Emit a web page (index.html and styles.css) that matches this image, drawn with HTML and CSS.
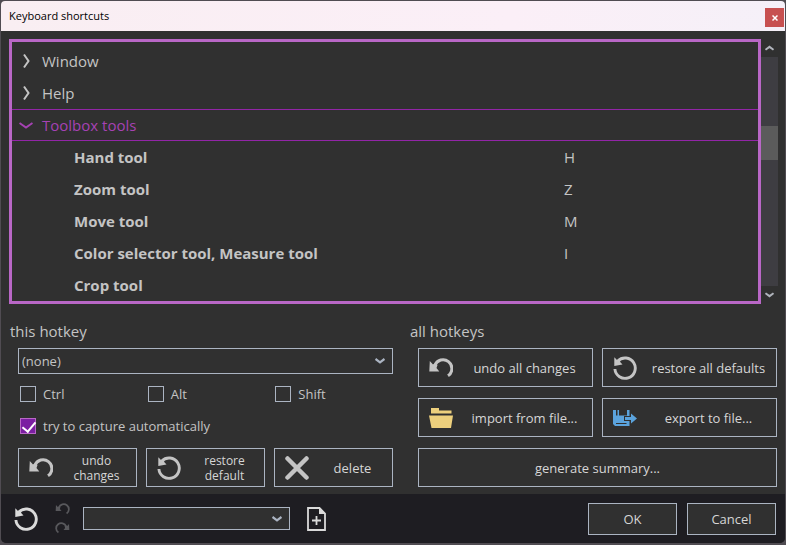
FILE: index.html
```html
<!DOCTYPE html>
<html lang="en">
<head>
<meta charset="utf-8">
<title>Keyboard shortcuts</title>
<link rel="stylesheet" href="styles.css">
</head>
<body>
<svg class="sprite" aria-hidden="true">
  <symbol id="undo" viewBox="0 0 24 24"><path d="M5.800 9.500A8.800 8.800 0 1 1 19 19.800" fill="none" stroke="currentColor" stroke-width="3"/><path d="M0.800 5L0.300 15.500H10.300L7.500 12L8.500 9L5.500 7.500L4 8.500Z" fill="currentColor"/></symbol>
  <symbol id="restore" viewBox="0 0 24 24"><path d="M4.800 5A10.200 10.200 0 1 1 1.900 13" fill="none" stroke="currentColor" stroke-width="2.900"/><path d="M1.300 1.300V10L9.500 8.500L7.200 6L7 3.500L4 4Z" fill="currentColor"/></symbol>
  <symbol id="down" viewBox="0 0 10 6"><path d="M0.500 1L5 4.300L9.500 1" fill="none" stroke="currentColor" stroke-width="2.200"/></symbol>
</svg>
<div class="window">
  <header class="titlebar">
    <h1>Keyboard shortcuts</h1>
    <button class="close" type="button" aria-label="Close"><svg viewBox="0 0 6 6"><path d="M0.500 0.500L5.500 5.500M5.500 0.500L0.500 5.500" stroke="currentColor" stroke-width="1.500"/></svg></button>
  </header>
  <main>
    <div class="browser">
      <div class="list">
        <table>
          <tbody>
            <tr class="group"><th colspan="2"><span><svg class="arrow" viewBox="0 0 14 16"><path d="M5 1.500L9.500 8L5 14.500" /></svg>Window</span></th></tr>
            <tr class="group"><th colspan="2"><span><svg class="arrow" viewBox="0 0 14 16"><path d="M5 1.500L9.500 8L5 14.500" /></svg>Help</span></th></tr>
            <tr class="group open"><th colspan="2"><span><svg class="arrow" viewBox="0 0 14 16"><path d="M0.500 6L7 10.500L13.500 6" /></svg>Toolbox tools</span></th></tr>
            <tr><th>Hand tool</th><td>H</td></tr>
            <tr><th>Zoom tool</th><td>Z</td></tr>
            <tr><th>Move tool</th><td>M</td></tr>
            <tr><th>Color selector tool, Measure tool</th><td>I</td></tr>
            <tr><th>Crop tool</th><td></td></tr>
          </tbody>
        </table>
      </div>
      <div class="scrollbar">
        <button type="button" aria-label="Scroll up"><svg class="up"><use href="#down"/></svg></button>
        <div class="track"><div class="thumb"></div></div>
        <button type="button" aria-label="Scroll down"><svg><use href="#down"/></svg></button>
      </div>
    </div>
    <div class="panels">
      <section>
        <h2 id="this-hotkey">this hotkey</h2>
        <div class="fields">
          <div class="picker">
            <select aria-labelledby="this-hotkey"><option>(none)</option></select>
            <svg><use href="#down"/></svg>
          </div>
          <div class="checks">
            <label><input type="checkbox">Ctrl</label>
            <label><input type="checkbox">Alt</label>
            <label><input type="checkbox">Shift</label>
            <label class="wide"><input type="checkbox" checked>try to capture automatically</label>
          </div>
          <div class="buttons three">
            <button class="btn small" type="button"><svg class="icon"><use href="#undo"/></svg><span>undo changes</span></button>
            <button class="btn small" type="button"><svg class="icon"><use href="#restore"/></svg><span>restore default</span></button>
            <button class="btn" type="button"><svg class="icon" viewBox="0 0 24 24"><path d="M2.500 2.500L21.500 21.500M21.500 2.500L2.500 21.500" stroke="currentColor" stroke-width="4.500" stroke-linecap="round"/></svg><span>delete</span></button>
          </div>
        </div>
      </section>
      <section>
        <h2>all hotkeys</h2>
        <div class="fields">
          <div class="buttons two">
            <button class="btn" type="button"><svg class="icon"><use href="#undo"/></svg><span>undo all changes</span></button>
            <button class="btn" type="button"><svg class="icon"><use href="#restore"/></svg><span>restore all defaults</span></button>
            <button class="btn" type="button"><svg class="icon folder" viewBox="0 0 24 24"><path d="M2 2H10V4.500H22.500V7.500H2ZM0 9.500H24L22 22H2.500Z" fill="currentColor"/></svg><span>import from file...</span></button>
            <button class="btn" type="button"><svg class="icon save" viewBox="0 0 24 24"><path d="M0 4H3V9.500H4.500V4H6V9.500H14V4H16.500V20H2L0 18Z" fill="currentColor"/><path d="M3 17.500H13.500" stroke="#303030"/><path d="M11 10H17V6L24 12.500L17 19V15H11Z" fill="#303030"/><path d="M12 11H18V7.500L24 12.500L18 17.500V14H12Z" fill="currentColor"/></svg><span>export to file...</span></button>
            <button class="btn wide" type="button"><span>generate summary...</span></button>
          </div>
        </div>
      </section>
    </div>
  </main>
  <footer>
    <button class="tool" type="button" aria-label="Restore"><svg class="icon"><use href="#restore"/></svg></button>
    <div class="history">
      <button class="tool" type="button" aria-label="Undo" disabled><svg><use href="#undo"/></svg></button>
      <button class="tool" type="button" aria-label="Redo" disabled><svg class="redo"><use href="#undo"/></svg></button>
    </div>
    <div class="picker presets">
      <select aria-label="Preset"><option></option></select>
      <svg><use href="#down"/></svg>
    </div>
    <button class="tool" type="button" aria-label="Add preset"><svg class="page" viewBox="0 0 19 24"><path d="M1 1H12.500L18 6.500V23H1ZM9.500 9V18M5 13.500H14" fill="none" stroke="currentColor" stroke-width="1.800"/><path d="M12 0.500V7H18.500Z" fill="currentColor"/></svg></button>
    <div class="actions">
      <button class="btn" type="button"><span>OK</span></button>
      <button class="btn" type="button"><span>Cancel</span></button>
    </div>
  </footer>
</div>
</body>
</html>
```
FILE: styles.css
```css
* { box-sizing: border-box; }

body {
  margin: 0;
  padding: 1px;
  min-height: 100vh;
  background: #504c52;
  color: #c4c4c4;
  font: 13px/16px "Open Sans", "Noto Sans", sans-serif;
}

button, select, input { font: inherit; color: inherit; margin: 0; }
button { padding: 0; border: 0; background: none; }
h1, h2 { margin: 0; font-weight: 400; }
svg { display: block; flex: none; }
.sprite { position: absolute; width: 0; height: 0; }

.window {
  display: flex;
  flex-direction: column;
  min-height: calc(100vh - 3px);
  background: #303030;
  border-radius: 4px 4px 5px 5px;
  overflow: hidden;
}

.titlebar {
  display: flex;
  align-items: center;
  justify-content: space-between;
  height: 30px;
  padding: 0 1px 0 8px;
  background: linear-gradient(90deg, #f9eef2, #fbeff7 65%, #f5f0f8);
  color: #000;
}
.titlebar h1 { font-size: 11px; line-height: 16px; }
.close {
  display: grid;
  place-items: center;
  width: 19px;
  height: 19px;
  margin-top: 3px;
  background: #c75050;
  color: #fff;
}
.close svg { width: 6px; height: 6px; }

main { flex: 1; padding: 8px 7px 7px 8px; }
.browser { display: flex; }
.list {
  flex: 1;
  padding-top: 3px;
  border: 3px solid #b967c6;
}
table { width: 100%; border-collapse: separate; border-spacing: 0; font-size: 15px; line-height: 20px; }
th, td { height: 32px; padding: 0; text-align: left; }
th { padding-left: 62px; font-weight: 700; }
td { width: 26%; }
.group th { padding-left: 7px; font-weight: 400; }
.group span { display: flex; align-items: center; gap: 9px; }
.open th { color: #a642b4; border: solid #9225a7; border-width: 1px 0; }
.arrow { width: 14px; height: 16px; fill: none; stroke: currentColor; stroke-width: 2; }

.scrollbar { display: flex; flex-direction: column; width: 17px; }
.scrollbar button { display: grid; place-items: center; height: 18px; color: #b0b4bc; }
.scrollbar svg { width: 9px; height: 6px; }
.up { transform: rotate(180deg); }
.track { flex: 1; background: #3e3d42; }
.thumb { height: 15%; margin-top: 69px; background: #5b5b5b; }

.panels {
  display: grid;
  grid-template-columns: 384fr 368fr;
  gap: 16px;
  padding: 17px 1px 0 0;
}
h2 { font-size: 15px; line-height: 20px; margin-bottom: 7px; padding-left: 1px; }
.fields { padding-left: 9px; }
.picker { display: grid; align-items: center; }
.picker select, .picker svg { grid-area: 1 / 1; }
.picker select {
  appearance: none;
  width: 100%;
  height: 26px;
  padding: 0 3px;
  border: 1px solid #abb4c2;
  border-radius: 0;
  background: #303030;
}
.picker svg { justify-self: end; width: 10px; height: 6px; margin-right: 8px; color: #abb4c2; pointer-events: none; }

.checks {
  display: grid;
  grid-template-columns: repeat(3, 1fr);
  gap: 16px 10px;
  padding: 12px 0 14px 2px;
}
.checks label { display: flex; gap: 7px; }
.wide { grid-column: 1 / -1; }
input[type="checkbox"] {
  appearance: none;
  display: grid;
  width: 16px;
  height: 16px;
  border: 1px solid #abb4c2;
}
input[type="checkbox"]:checked { background: #7b1fa2; border-color: #b967c6; }
input:checked::after {
  content: "";
  width: 6px;
  height: 11px;
  margin-left: 4px;
  border: solid #fff;
  border-width: 0 2px 2px 0;
  transform: rotate(40deg);
}

.buttons { display: grid; gap: 11px 9px; }
.three { grid-template-columns: repeat(3, 1fr); }
.two { grid-template-columns: repeat(2, 1fr); }
.btn {
  display: flex;
  align-items: center;
  height: 39px;
  padding: 0 10px;
  border: 1px solid #abb4c2;
  background: #303030;
}
.btn span { flex: 1; padding: 0 2px; text-align: center; color: #d6d6d6; }
.btn .icon + span { padding: 0 0 0 14px; }
.small { font-size: 12px; line-height: 15px; }
.icon { width: 24px; height: 24px; }
.folder { color: #edd07d; }
.save { color: #5ba3dc; }

footer {
  display: flex;
  align-items: center;
  height: 49px;
  padding: 0 9px 0 13px;
  background: #1e1d22;
}
.tool { color: #dadada; }
.history { display: grid; gap: 5px; margin: 0 13px 0 17px; }
.history .tool { color: #58585c; }
.history svg { width: 15px; height: 14px; }
.redo { transform: scaleX(-1); }
.presets { width: 207px; margin-right: 17px; }
.presets select { height: 23px; }
.page { width: 19px; height: 24px; }
.actions { display: flex; gap: 10px; margin-left: auto; }
.actions .btn { width: 89px; height: 32px; }
```
